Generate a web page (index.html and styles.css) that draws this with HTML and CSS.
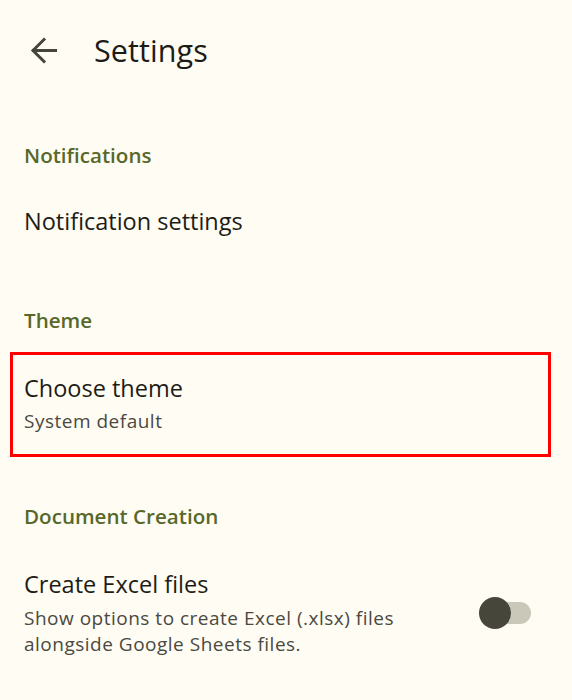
FILE: index.html
```html
<!DOCTYPE html>
<html>
<head>
<meta charset="utf-8">
<link rel="stylesheet" href="styles.css">
</head>
<body>
<div class="page">
  <header class="topbar">
    <svg class="back" width="27" height="27" viewBox="0 0 27 27">
      <path d="M25.5 13.5H3.5M14 2.5L3 13.5L14 24.5" fill="none" stroke="#45453c" stroke-width="3" stroke-linecap="square" stroke-linejoin="miter"/>
    </svg>
    <h1 class="title">Settings</h1>
  </header>

  <section class="group">
    <h2 class="group-title">Notifications</h2>
    <div class="item item-single">
      <div class="item-title">Notification settings</div>
    </div>
  </section>

  <section class="group">
    <h2 class="group-title">Theme</h2>
    <div class="item item-highlight">
      <div class="item-title">Choose theme</div>
      <div class="item-sub">System default</div>
    </div>
  </section>

  <section class="group group-doc">
    <h2 class="group-title">Document Creation</h2>
    <div class="item item-toggle">
      <div class="item-text">
        <div class="item-title">Create Excel files</div>
        <div class="item-sub">Show options to create Excel (.xlsx) files alongside Google Sheets files.</div>
      </div>
      <div class="switch"><span class="knob"></span></div>
    </div>
  </section>
</div>
</body>
</html>
```
FILE: styles.css
```css
html, body {
  margin: 0;
  padding: 0;
  background: #fffcf4;
}
body {
  font-family: "Open Sans", "Noto Sans", sans-serif;
  color: #1d1c16;
}
.page {
  width: 572px;
  height: 700px;
  overflow: hidden;
}
.topbar {
  display: flex;
  align-items: center;
  height: 100px;
  padding-left: 30px;
}
.back {
  display: block;
}
.title {
  margin: 0 0 0 37px;
  font-size: 30.5px;
  font-weight: 400;
  color: #1d1c16;
  letter-spacing: 0.1px;
}
.group {
  display: flex;
  flex-direction: column;
}
.group-title {
  margin: 0;
  padding: 42px 24px 0;
  height: 26px;
  line-height: 26px;
  font-size: 20.6px;
  font-weight: 600;
  color: #58682a;
}
.group-doc .group-title {
  padding-top: 46px;
}
.item {
  padding: 0 24px;
}
.item-single {
  height: 88px;
  display: flex;
  align-items: center;
  margin-top: 9px;
}
.item-title {
  font-size: 23.5px;
  line-height: 28px;
  color: #1d1c16;
}
.item-sub {
  font-size: 19px;
  line-height: 26px;
  letter-spacing: 0.5px;
  color: #4a493f;
}
.item-highlight {
  margin: 19px 21px 0 10px;
  padding: 18px 14px 19px 11px;
  border: 3px solid #ff0000;
  height: 62px;
  display: flex;
  flex-direction: column;
  justify-content: center;
}
.item-highlight .item-sub {
  margin-top: 6px;
}
.item-toggle {
  display: flex;
  align-items: flex-start;
  margin-top: 41px;
}
.item-text {
  flex: 1;
  max-width: 410px;
}
.item-toggle .item-sub {
  margin-top: 7px;
}
.switch {
  position: relative;
  width: 37px;
  height: 22px;
  border-radius: 11px;
  background: #c9c8b9;
  margin-left: auto;
  margin-right: 17px;
  margin-top: 32px;
}
.knob {
  position: absolute;
  left: -15px;
  top: -5px;
  width: 32px;
  height: 32px;
  border-radius: 50%;
  background: #46463b;
}
```
